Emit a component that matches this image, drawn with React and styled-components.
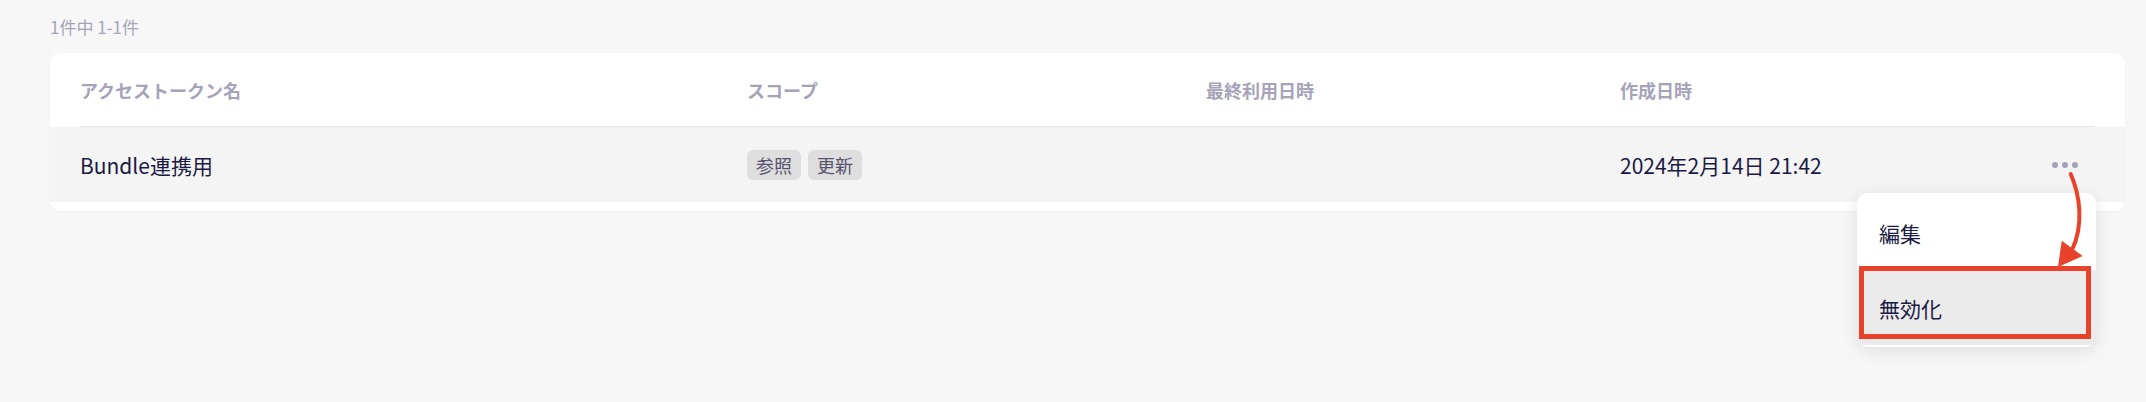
import React from "react";
import styled, { createGlobalStyle } from "styled-components";

const GlobalStyle = createGlobalStyle`
  body {
    margin: 0;
    background: #f7f7f7;
    font-family: "Noto Sans CJK JP", "Noto Sans", sans-serif;
  }
`;

const Page = styled.div`
  padding: 16px 21px 0 50px;
  height: 402px;
  box-sizing: border-box;
`;

const Count = styled.div`
  font-size: 17px;
  line-height: 22px;
  color: #a6a3b7;
  margin-bottom: 15px;
`;

const Card = styled.div`
  position: relative;
  background: #fff;
  border-radius: 10px;
  padding-bottom: 9px;
  box-shadow: 0 1px 3px rgba(0, 0, 0, 0.03);
`;

const columns = "667px 459px 414px 1fr 60px";

const HeaderRow = styled.div`
  display: grid;
  grid-template-columns: ${columns};
  align-items: center;
  height: 73px;
  margin: 0 30px;
  border-bottom: 1px solid #e3e2eb;
`;

const HeaderCell = styled.div`
  font-size: 18px;
  font-weight: 700;
  color: #a6a3b9;
`;

const BodyRow = styled.div`
  display: grid;
  grid-template-columns: ${columns};
  align-items: center;
  height: 75px;
  padding: 0 30px;
  background: #f4f4f5;
`;

const Cell = styled.div`
  font-size: 21px;
  color: #1b1a42;
  display: flex;
  align-items: center;
  gap: 7px;
  justify-content: ${(p) => (p.$end ? "flex-end" : "flex-start")};
  padding-right: ${(p) => (p.$end ? "17px" : "0")};
`;

const Tag = styled.span`
  display: inline-flex;
  align-items: center;
  height: 30px;
  padding: 0 9px;
  border-radius: 6px;
  background: #dedede;
  color: #57536f;
  font-size: 18px;
`;

const Dots = styled.div`
  display: flex;
  gap: 4px;
`;

const Dot = styled.span`
  width: 6px;
  height: 6px;
  border-radius: 50%;
  background: #a6a3b9;
`;

const Menu = styled.div`
  position: absolute;
  top: 140px;
  right: 29px;
  width: 239px;
  padding: 2px 0;
  background: #fff;
  border-radius: 10px;
  box-shadow: 0 4px 18px rgba(0, 0, 0, 0.1);
  z-index: 2;
`;

const MenuItem = styled.div`
  display: flex;
  align-items: center;
  height: 75px;
  padding-left: 22px;
  font-size: 21px;
  color: #1b1a42;
  background: ${(p) => (p.$active ? "#ebebeb" : "transparent")};
`;

const Highlight = styled.div`
  position: absolute;
  left: 2px;
  top: 73px;
  width: 232px;
  height: 73px;
  box-sizing: border-box;
  border: 5px solid #e8432a;
`;

const Arrow = styled.svg`
  position: absolute;
  left: 2000px;
  top: 117px;
  z-index: 3;
  overflow: visible;
`;

export default function App() {
  return (
    <>
      <GlobalStyle />
      <Page>
        <Count>1件中 1-1件</Count>
        <Card>
          <HeaderRow>
            <HeaderCell>アクセストークン名</HeaderCell>
            <HeaderCell>スコープ</HeaderCell>
            <HeaderCell>最終利用日時</HeaderCell>
            <HeaderCell>作成日時</HeaderCell>
            <HeaderCell />
          </HeaderRow>
          <BodyRow>
            <Cell>Bundle連携用</Cell>
            <Cell>
              <Tag>参照</Tag>
              <Tag>更新</Tag>
            </Cell>
            <Cell />
            <Cell>2024年2月14日 21:42</Cell>
            <Cell $end>
              <Dots>
                <Dot />
                <Dot />
                <Dot />
              </Dots>
            </Cell>
          </BodyRow>
          <Menu>
            <MenuItem>編集</MenuItem>
            <MenuItem $active>無効化</MenuItem>
            <Highlight />
          </Menu>
          <Arrow width="40" height="100" viewBox="0 0 40 100">
            <path
              d="M20.7 4 C 30 25, 34 55, 22 80"
              fill="none"
              stroke="#e8432a"
              strokeWidth="4"
              strokeLinecap="round"
            />
            <polygon points="8,97 11.7,70.7 32.7,86" fill="#e8432a" />
          </Arrow>
        </Card>
      </Page>
    </>
  );
}
